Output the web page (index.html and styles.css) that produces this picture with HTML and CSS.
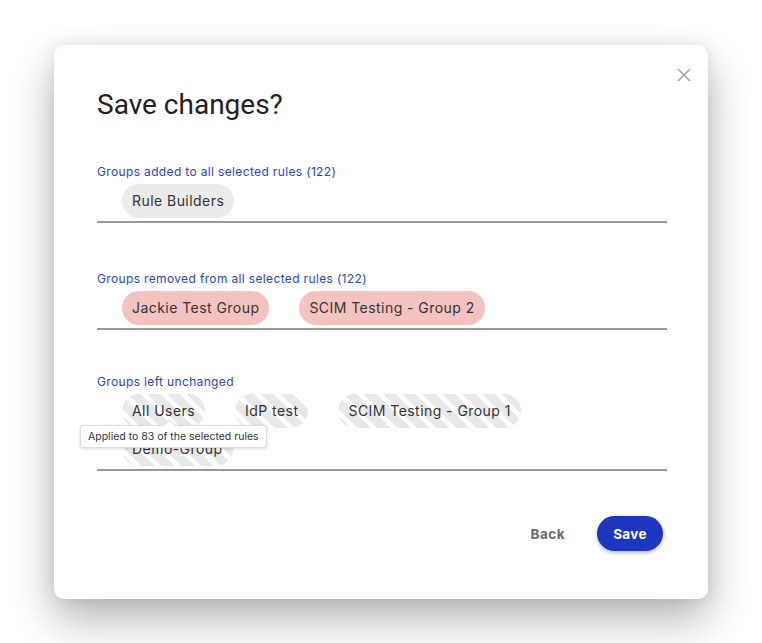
FILE: index.html
```html
<!DOCTYPE html>
<html lang="en">
<head>
  <meta charset="UTF-8" />
  <title>Save changes?</title>
  <link rel="stylesheet" href="styles.css">
</head>
<body>

<div class="backdrop">
  <div class="modal">
    <button class="close-btn" aria-label="Close">
      <svg width="14" height="14" viewBox="0 0 14 14">
        <path d="M1 1 L13 13 M13 1 L1 13" stroke="#a8a8a8" stroke-width="1.6" fill="none"/>
      </svg>
    </button>

    <h1 class="title">Save changes?</h1>

    <div class="field">
      <div class="field-label">Groups added to all selected rules (122)</div>
      <div class="chips">
        <span class="chip">Rule Builders</span>
      </div>
    </div>

    <div class="field removed-field">
      <div class="field-label">Groups removed from all selected rules (122)</div>
      <div class="chips">
        <span class="chip removed">Jackie Test Group</span>
        <span class="chip removed">SCIM Testing - Group 2</span>
      </div>
    </div>

    <div class="field unchanged-field">
      <div class="field-label">Groups left unchanged</div>
      <div class="chips">
        <span class="chip partial">All Users
          <span class="tooltip">Applied to 83 of the selected rules</span>
        </span>
        <span class="chip partial">IdP test</span>
        <span class="chip partial">SCIM Testing - Group 1</span>
        <span class="chip partial">Demo-Group</span>
      </div>
    </div>

    <div class="actions">
      <button class="btn-back">Back</button>
      <button class="btn-save">Save</button>
    </div>
  </div>
</div>

</body>
</html>
```

FILE: styles.css
```css
html, body {
  margin: 0;
  padding: 0;
  background-color: #fff;
}

body {
  font-family: 'Inter', 'Open Sans', sans-serif;
  color: #333;
}

.backdrop {
  box-sizing: border-box;
  min-height: 100vh;
  padding: 45px 0 0 54px;
}

.modal {
  position: relative;
  box-sizing: border-box;
  width: 654px;
  height: 554px;
  background-color: #fff;
  border-radius: 10px;
  box-shadow: 0 20px 44px rgba(0, 0, 0, 0.3), 0 0 16px rgba(0, 0, 0, 0.08);
  padding: 43px 41px 48px 43px;
}

.close-btn {
  position: absolute;
  top: 23px;
  right: 17px;
  background: none;
  border: none;
  padding: 0;
  width: 14px;
  height: 14px;
  cursor: pointer;
}

.close-btn svg {
  display: block;
}

.title {
  margin: 0;
  font-family: 'Roboto', sans-serif;
  font-size: 28px;
  line-height: 34px;
  font-weight: 400;
  color: #222;
}

.field {
  margin-top: 43px;
  border-bottom: 2px solid #999;
}

.removed-field {
  margin-top: 49px;
}

.unchanged-field {
  margin-top: 45px;
}

.field-label {
  font-size: 12px;
  line-height: 14px;
  letter-spacing: 0.35px;
  color: #2d43c6;
}

.chips {
  display: flex;
  flex-wrap: wrap;
  gap: 4px 30px;
  margin-top: 5px;
  padding: 0 25px 3px 25px;
}

.chip {
  position: relative;
  display: inline-block;
  height: 34px;
  line-height: 34px;
  padding: 0 10px;
  border-radius: 17px;
  background-color: #ebebeb;
  font-size: 14px;
  letter-spacing: 0.45px;
  color: #333;
  white-space: nowrap;
}

.chip.removed {
  background-color: #f5c3bf;
}

.chip.partial {
  background: repeating-linear-gradient(45deg, #e8e8e8 0 9px, #fff 9px 14px);
}

.tooltip {
  position: absolute;
  top: 31px;
  left: -42px;
  z-index: 2;
  height: 21px;
  line-height: 21px;
  padding: 0 7px;
  background-color: #fff;
  border: 1px solid #ddd;
  border-radius: 3px;
  box-shadow: 0 1px 3px rgba(0, 0, 0, 0.15);
  font-size: 10.5px;
  letter-spacing: 0;
  color: #333;
}

.tooltip::before {
  content: "";
  position: absolute;
  top: -5px;
  left: 84px;
  width: 8px;
  height: 8px;
  background-color: #fff;
  border-left: 1px solid #ddd;
  border-top: 1px solid #ddd;
  transform: rotate(45deg);
}

.actions {
  display: flex;
  justify-content: flex-end;
  align-items: center;
  gap: 32px;
  margin-top: 45px;
  margin-right: 4px;
}

.btn-back {
  background: none;
  border: none;
  padding: 0;
  font-family: inherit;
  font-size: 13.5px;
  font-weight: 700;
  letter-spacing: 0.5px;
  color: #6b6b6b;
  cursor: pointer;
}

.btn-save {
  height: 35px;
  width: 66px;
  border: none;
  border-radius: 18px;
  background-color: #1e35bf;
  color: #fff;
  font-family: inherit;
  font-size: 13.5px;
  font-weight: 700;
  letter-spacing: 0.3px;
  box-shadow: 0 2px 4px rgba(0, 0, 0, 0.25);
  cursor: pointer;
}
```
